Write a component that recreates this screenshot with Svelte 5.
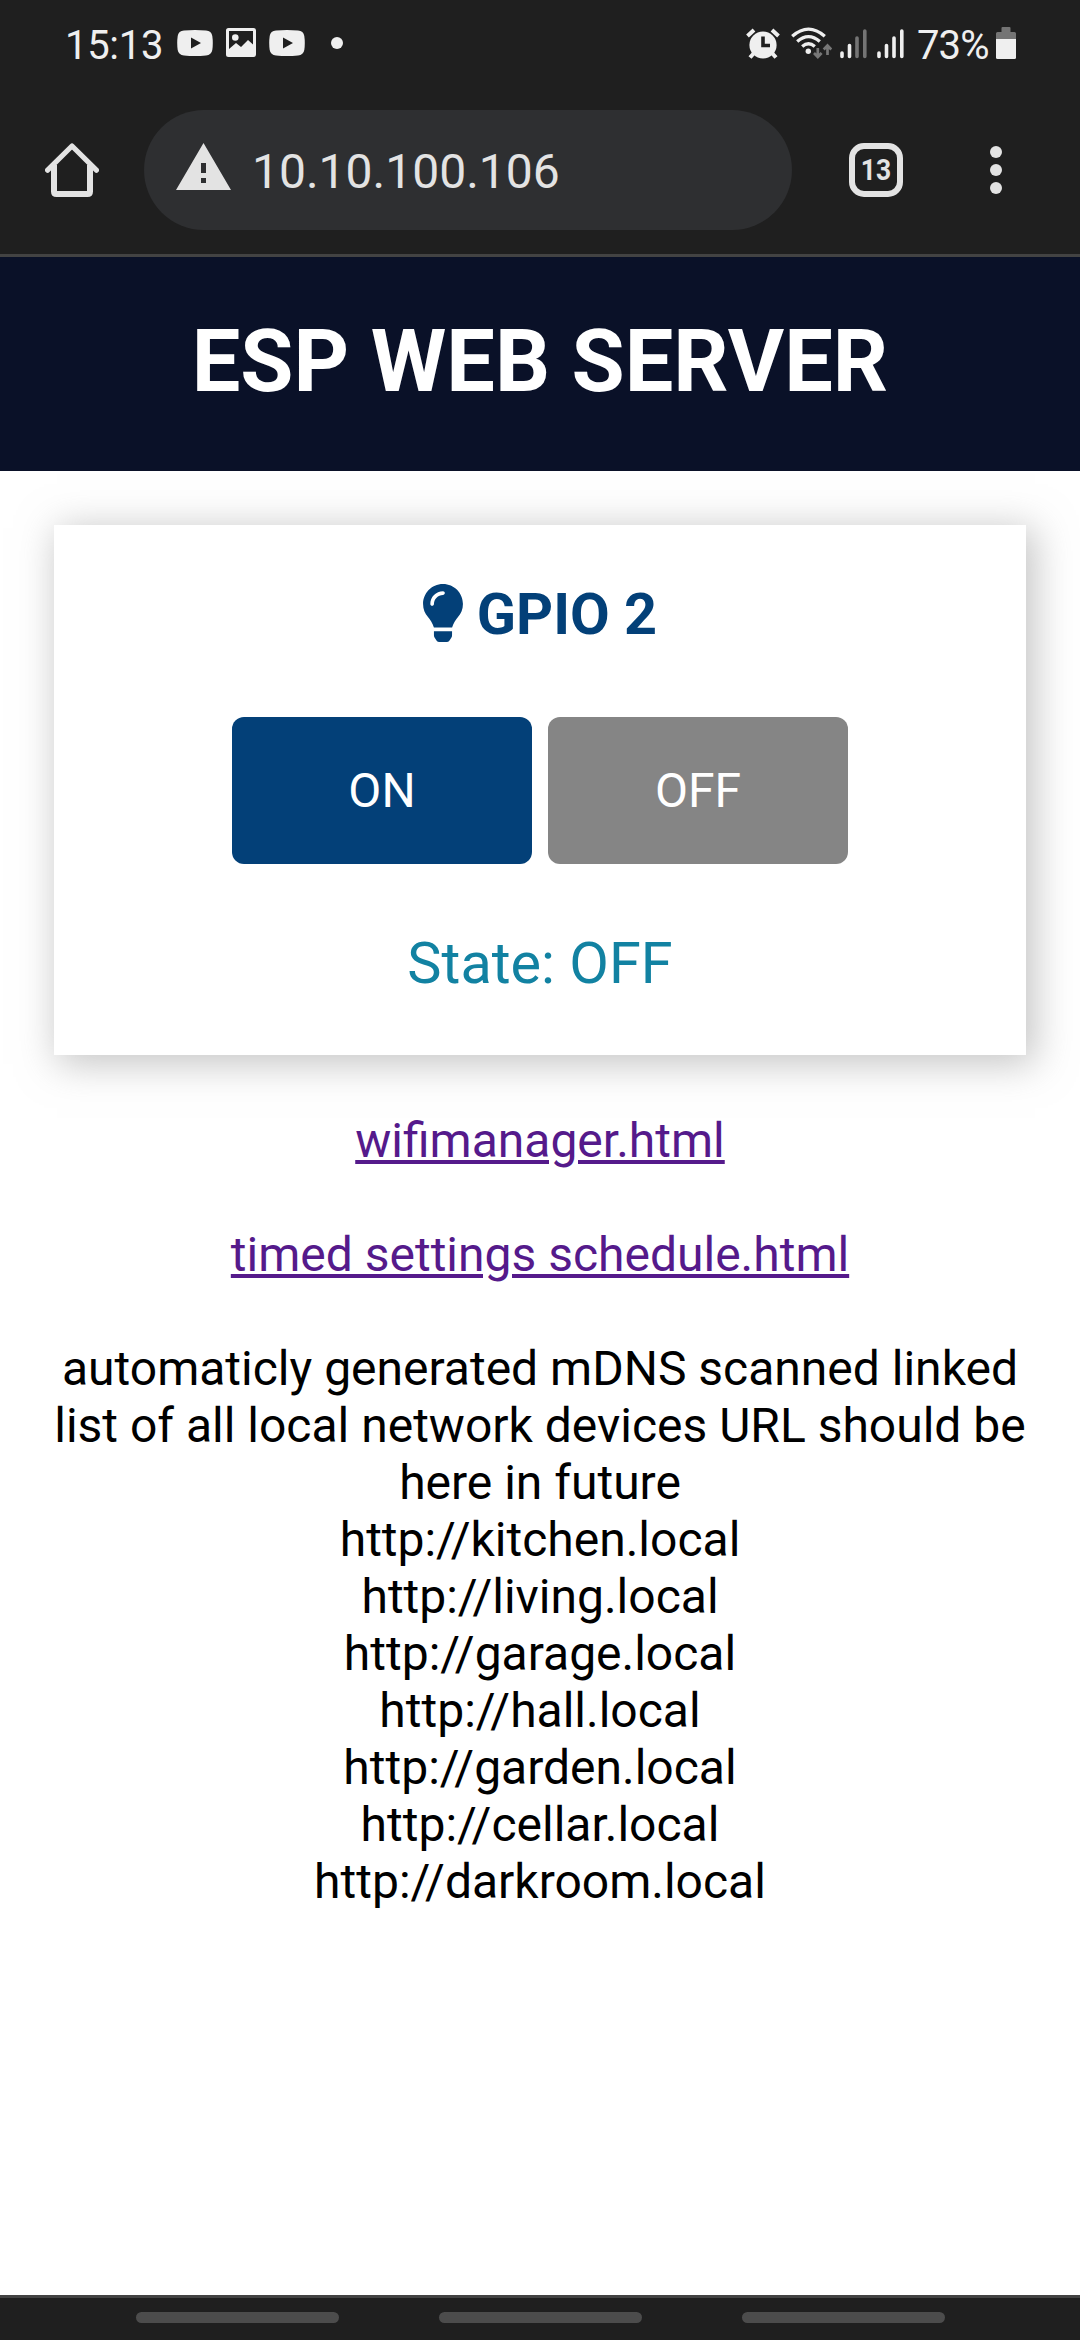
<script>
  const hosts = ['kitchen', 'living', 'garage', 'hall', 'garden', 'cellar', 'darkroom'];
  let output = $state('OFF');
</script>

{#snippet video()}
  <svg class="video" width="36" height="26" viewBox="0 0 36 26">
    <path fill="#efefef" fill-rule="evenodd" d="M7 .6Q18-.5 29 .6Q34.500 1 35.300 6Q36.300 13 35.300 20Q34.500 25 29 25.400Q18 26.500 7 25.400Q1.500 25 .7 20Q-.3 13 .7 6Q1.500 1 7 .6ZM14 7.500V18.500L24 13Z" />
  </svg>
{/snippet}

<div class="screen">
  <header class="status">
    <span class="clock">15:13</span>
    {@render video()}
    <svg class="photo" width="30" height="29" viewBox="0 0 30 29">
      <path fill="#efefef" fill-rule="evenodd" d="M2.500 0H27.500Q30 0 30 2.500V26.500Q30 29 27.500 29H2.500Q0 29 0 26.500V2.500Q0 0 2.500 0ZM3 3V21L10 15L15 19L22 12L27 16.500V3Z" />
      <circle cx="9.300" cy="9.500" r="3.300" fill="#efefef" />
    </svg>
    {@render video()}
    <i class="more"></i>
    <span class="grow"></span>
    <svg class="alarm" width="34" height="31" viewBox="0 0 34 31">
      <g stroke="#efefef" stroke-width="4" fill="none">
        <path d="M1.500 8L8 2M26 2L32.500 8M8.500 24.500L4 29.500M25.500 24.500L30 29.500" />
      </g>
      <circle cx="17" cy="17" r="13.600" fill="#efefef" />
      <path d="M17 8.500V17.500H24" fill="none" stroke="#1f1f1f" stroke-width="3.600" />
    </svg>
    <svg class="wifi" width="41" height="32" viewBox="0 0 41 32">
      <g fill="none" stroke="#efefef" stroke-width="3.300">
        <path d="M1.200 9.200Q17.500-5 33.800 9.200M6.200 14.600Q17.500 4.600 28.800 14.600M11.200 19.600Q17.500 14 23.800 19.600" />
      </g>
      <circle cx="17.300" cy="24.300" r="2.700" fill="#efefef" />
      <path d="M26.800 21V29.500M23 26L26.800 30L30.600 26M36.500 28V20M32.700 22.500L36.500 18.500L40.300 22.500" fill="none" stroke="#777" stroke-width="2.700" />
    </svg>
    <svg class="signal" width="27" height="30" viewBox="0 0 27 30">
      <g stroke="#efefef" stroke-width="3.600" stroke-linecap="round">
        <path d="M2 24V27.500M9.500 16.500V27.500" />
        <path stroke="#747474" d="M17 9V27.500M24.800 2V27.500" />
      </g>
    </svg>
    <svg class="signal full" width="27" height="30" viewBox="0 0 27 30">
      <path d="M2 24V27.500M9.500 16.500V27.500M17 9V27.500M24.800 2V27.500" stroke="#efefef" stroke-width="3.600" stroke-linecap="round" />
    </svg>
    <span class="percent">73%</span>
    <svg class="battery" width="20" height="32" viewBox="0 0 20 32">
      <path fill="#747474" d="M6.500 0H13.500Q14.500 0 14.500 1V5H18.500Q20 5 20 6.500V13H0V6.500Q0 5 1.500 5H5.500V1Q5.500 0 6.500 0Z" />
      <path fill="#efefef" d="M0 12H20V30.500Q20 32 18.500 32H1.500Q0 32 0 30.500Z" />
    </svg>
  </header>

  <div class="toolbar">
    <svg class="home" width="54" height="54" viewBox="0 0 54 54">
      <g fill="none" stroke="#e3e3e3" stroke-linejoin="round">
        <path d="M9 22V48.500Q9 51 11.500 51H42.500Q45 51 45 48.500V22" stroke-width="6" />
        <path d="M2.600 27.200L27 3L51.400 27.200" stroke-width="5.200" stroke-linecap="round" />
      </g>
    </svg>
    <div class="address">
      <svg width="55" height="47" viewBox="0 0 55 47">
        <path fill="#e3e3e3" fill-rule="evenodd" d="M27.500 0L55 47H0ZM25 20V30H30V20ZM25 35V40H30V35Z" />
      </svg>
      <span>10.10.100.106</span>
    </div>
    <div class="tabs"><span>13</span></div>
    <svg class="menu" width="12" height="48" viewBox="0 0 12 48">
      <g fill="#e3e3e3">
        <circle cx="6" cy="6" r="6" /><circle cx="6" cy="24" r="6" /><circle cx="6" cy="42" r="6" />
      </g>
    </svg>
  </div>

  <main>
    <div class="banner"><h1>ESP WEB SERVER</h1></div>
    <section class="card">
      <h2>
        <svg width="40" height="58" viewBox="0 0 352 512">
          <path fill="currentColor" d="M96.060 454.350c.01 6.290 1.870 12.450 5.360 17.690l17.090 25.690a31.990 31.990 0 0 0 26.640 14.280h61.710a31.990 31.990 0 0 0 26.640-14.280l17.090-25.690a31.989 31.989 0 0 0 5.360-17.690l.04-38.350H96.010l.05 38.350zM0 176c0 44.370 16.450 84.850 43.560 115.780 16.520 18.850 42.360 58.230 52.210 91.450.04.26.07.52.11.780h160.240c.04-.26.07-.51.11-.780 9.850-33.220 35.690-72.600 52.210-91.450C335.550 260.850 352 220.370 352 176 352 78.610 272.910-.3 175.450 0 73.440.31 0 82.970 0 176zm176-80c-44.110 0-80 35.890-80 80 0 8.840-7.160 16-16 16s-16-7.160-16-16c0-61.760 50.240-112 112-112 8.840 0 16 7.160 16 16s-7.160 16-16 16z" />
        </svg>
        <span>GPIO 2</span>
      </h2>
      <div class="buttons">
        <button class="on" onclick={() => (output = 'ON')}>ON</button>
        <button class="off" onclick={() => (output = 'OFF')}>OFF</button>
      </div>
      <p class="state">State: {output}</p>
    </section>
    <nav>
      <a href="#wifi">wifimanager.html</a>
      <a href="#schedule">timed settings schedule.html</a>
    </nav>
    <div class="devices">
      <p>automaticly generated mDNS scanned linked list of all local network devices URL should be here in future</p>
      {#each hosts as host}
        <p>http://{host}.local</p>
      {/each}
    </div>
  </main>

  <footer><i></i><i></i><i></i></footer>
</div>

<style>
  :global(body) { margin: 0; background: #fff; }
  * { box-sizing: border-box; }
  svg { display: block; flex: none; }
  h1, h2, p { margin: 0; }
  .screen {
    width: 1080px;
    height: 2340px;
    display: flex;
    flex-direction: column;
    overflow: hidden;
    background: #fff;
    font-family: Roboto, sans-serif;
    font-size: 48px;
    line-height: 57px;
  }

  .status {
    height: 90px;
    display: flex;
    align-items: flex-start;
    padding: 0 64px 0 65px;
    background: #1f1f1f;
    color: #efefef;
    font-size: 40px;
    line-height: 48px;
  }
  .clock { width: 112px; margin-top: 22px; letter-spacing: -0.300px; white-space: nowrap; }
  .video { margin-top: 30px; }
  .photo { margin: 28px 13px 0; }
  .more { width: 12px; height: 12px; margin: 37px 0 0 26px; border-radius: 50%; background: #efefef; }
  .grow { flex: 1; }
  .alarm { margin-top: 28px; }
  .wifi { margin: 27px 8px 0 11px; }
  .signal { margin-top: 29px; }
  .full { margin-left: 10px; }
  .percent { width: 79px; margin: 22px 0 0 13px; letter-spacing: -0.900px; white-space: nowrap; }
  .battery { margin-top: 27px; }

  .toolbar {
    height: 167px;
    display: flex;
    align-items: center;
    padding: 0 78px 4px 45px;
    background: #1f1f1f;
    border-bottom: 3px solid #434343;
    color: #e3e3e3;
  }
  .address {
    width: 648px;
    height: 120px;
    margin-left: 45px;
    padding-left: 32px;
    display: flex;
    align-items: center;
    gap: 21px;
    border-radius: 60px;
    background: #2e2f31;
  }
  .address svg { margin-bottom: 7px; }
  .address span { margin-top: 2px; }
  .tabs {
    width: 54px;
    height: 54px;
    margin-left: 57px;
    border: 6px solid #e3e3e3;
    border-radius: 15px;
    font: bold 30px/42px Roboto, sans-serif;
    text-align: center;
  }
  .tabs span { display: block; transform: scaleX(0.88); }
  .menu { margin-left: auto; }

  main { flex: 1; }
  .banner {
    height: 214px;
    padding-top: 54px;
    background: #0a1128;
    color: #fff;
    text-align: center;
  }
  h1 { font-size: 86.400px; line-height: 101px; font-weight: 700; }
  .card {
    height: 530px;
    margin: 54px 54px 57px;
    padding-top: 56px;
    background: #fff;
    box-shadow: 6px 6px 36px 3px rgba(140, 140, 140, 0.5);
    text-align: center;
  }
  h2 {
    display: flex;
    justify-content: center;
    gap: 14px;
    color: #034078;
    font-size: 57.600px;
    line-height: 68px;
    font-weight: 700;
  }
  h2 svg { margin-top: 2.500px; }
  .buttons { display: flex; justify-content: center; gap: 16px; margin-top: 68px; }
  button {
    width: 300px;
    height: 147px;
    padding: 0;
    border: 0;
    border-radius: 12px;
    color: #fff;
    font: 48px/57px Roboto, sans-serif;
  }
  .on { background: #034078; }
  .off { background: #858585; }
  .state { margin-top: 66px; color: #1282a2; font-size: 57.600px; line-height: 68px; }
  nav { display: flex; flex-direction: column; align-items: center; gap: 57px; }
  a { color: #551a8b; }
  .devices { margin-top: 57px; padding: 0 54px; color: #000; text-align: center; }

  footer {
    height: 45px;
    display: flex;
    justify-content: center;
    gap: 100px;
    padding-top: 14px;
    border-top: 3px solid #434343;
    background: #1f1f1f;
  }
  footer i { width: 203px; height: 11px; border-radius: 5.500px; background: #4c4c4c; }
</style>
